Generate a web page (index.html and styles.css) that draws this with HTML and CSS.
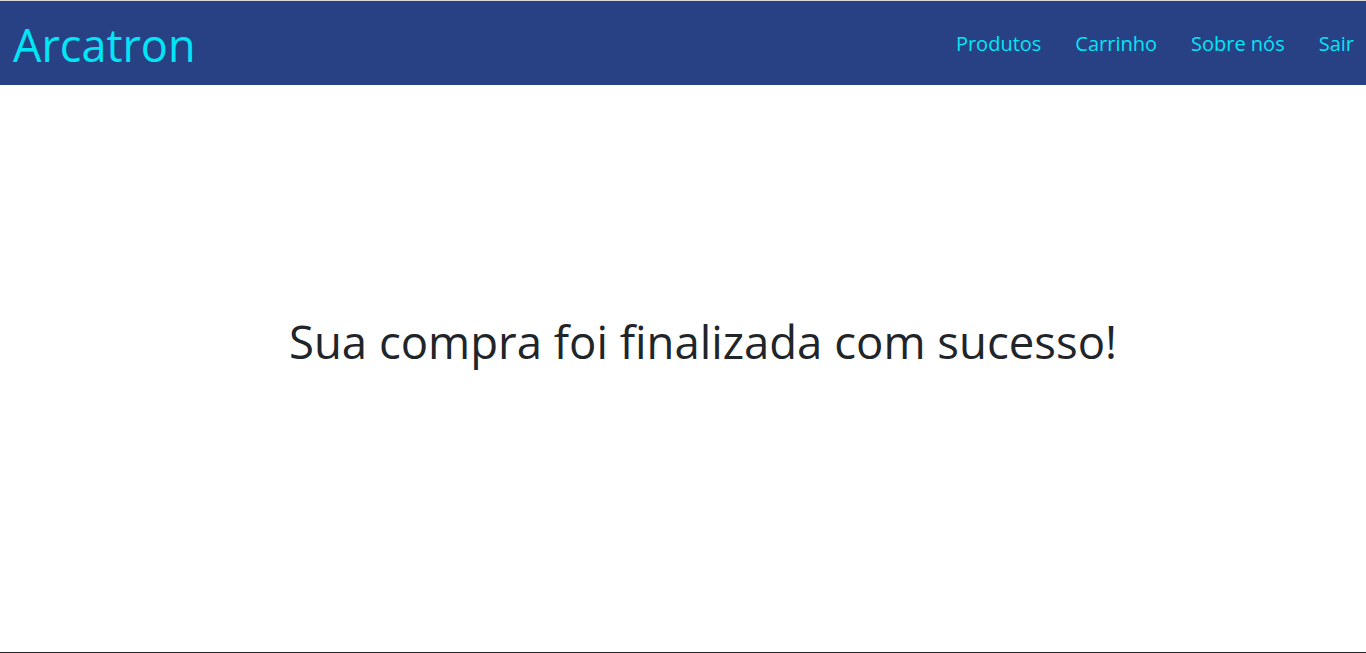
FILE: index.html
```html
<!DOCTYPE html>
<html lang="pt-br">
<head>
<meta charset="utf-8">
<title>Arcatron</title>
<link rel="stylesheet" href="styles.css">
</head>
<body>
<div class="topline"></div>
<header class="navbar">
  <a class="brand" href="#">Arcatron</a>
  <nav class="nav">
    <a href="#">Produtos</a>
    <a href="#">Carrinho</a>
    <a href="#">Sobre nós</a>
    <a href="#">Sair</a>
  </nav>
</header>
<main class="content">
  <h1 class="message">Sua compra foi finalizada com sucesso!</h1>
</main>
</body>
</html>
```
FILE: styles.css
```css
* { box-sizing: border-box; }
html, body { margin: 0; padding: 0; height: 100%; }
body {
  font-family: "Open Sans", "Noto Sans", sans-serif;
  background: #fff;
  color: #212529;
  display: flex;
  flex-direction: column;
  overflow: hidden;
}
.topline { height: 1px; background: #d9d9d9; }
.navbar {
  height: 84px;
  background: #284184;
  display: flex;
  align-items: center;
  justify-content: space-between;
  padding: 0 12px 0 13px;
}
.brand {
  color: #00e6f6;
  text-decoration: none;
  font-size: 45px;
  line-height: 1;
  margin-top: 2px;
}
.nav { display: flex; gap: 34px; margin-top: 0; }
.nav a {
  color: #00e6f6;
  text-decoration: none;
  font-size: 20px;
}
.content {
  flex: 1;
  display: flex;
  align-items: center;
  justify-content: center;
  padding-left: 40px;
  border-bottom: 1px solid #1e2326;
}
.message {
  font-weight: 400;
  font-size: 45.5px;
  margin: 0 0 56px;
}
```
